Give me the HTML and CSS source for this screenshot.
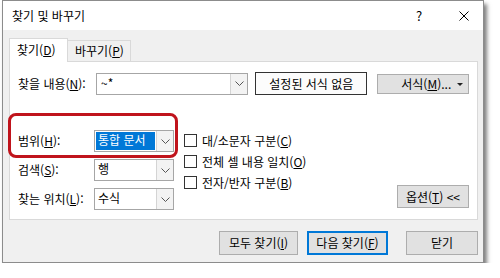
FILE: index.html
```html
<!DOCTYPE html>
<html lang="ko">
<head>
    <meta charset="UTF-8">
    <title>찾기 및 바꾸기</title>
    <link rel="stylesheet" href="styles.css">
</head>
<body>

    <div class="dialog">
        <div class="titlebar">
            <span class="title">찾기 및 바꾸기</span>
            <span class="tb-btn help">?</span>
            <span class="tb-btn close">
                <svg width="10" height="10" viewBox="0 0 10 10"><path d="M0.5 0.5 L9.5 9.5 M9.5 0.5 L0.5 9.5" stroke="#000" stroke-width="1" fill="none"/></svg>
            </span>
        </div>

        <div class="body">
            <div class="tabs">
                <div class="tab active">찾기(<u>D</u>)</div>
                <div class="tab">바꾸기(<u>P</u>)</div>
            </div>

            <div class="panel">
                <div class="find-row">
                    <span class="lbl lbl-find">찾을 내용(<u>N</u>):</span>
                    <div class="combo">
                        <span class="combo-text">~*</span>
                        <span class="arrow"><svg width="9" height="5" viewBox="0 0 9 5"><path d="M0.5 0.5 L4.5 4.5 L8.5 0.5" stroke="#555" fill="none"/></svg></span>
                    </div>
                    <div class="preview">설정된 서식 없음</div>
                    <div class="btn fmt-btn">
                        <span>서식(<u>M</u>)...</span>
                        <svg class="caret" width="6" height="3" viewBox="0 0 6 3"><path d="M0 0 H6 L3 3 Z" fill="#222"/></svg>
                    </div>
                </div>

                <div class="opts">
                    <div class="fields">
                        <div class="field">
                            <span class="lbl">범위(<u>H</u>):</span>
                            <div class="select">
                                <span class="sel-text picked">통합 문서</span>
                                <span class="arrow"><svg width="9" height="5" viewBox="0 0 9 5"><path d="M0.5 0.5 L4.5 4.5 L8.5 0.5" stroke="#555" fill="none"/></svg></span>
                            </div>
                        </div>
                        <div class="field">
                            <span class="lbl">검색(<u>S</u>):</span>
                            <div class="select">
                                <span class="sel-text">행</span>
                                <span class="arrow"><svg width="9" height="5" viewBox="0 0 9 5"><path d="M0.5 0.5 L4.5 4.5 L8.5 0.5" stroke="#555" fill="none"/></svg></span>
                            </div>
                        </div>
                        <div class="field">
                            <span class="lbl">찾는 위치(<u>L</u>):</span>
                            <div class="select">
                                <span class="sel-text">수식</span>
                                <span class="arrow"><svg width="9" height="5" viewBox="0 0 9 5"><path d="M0.5 0.5 L4.5 4.5 L8.5 0.5" stroke="#555" fill="none"/></svg></span>
                            </div>
                        </div>
                    </div>

                    <div class="checks">
                        <div class="check"><span class="box"></span>대/소문자 구분(<u>C</u>)</div>
                        <div class="check"><span class="box"></span>전체 셀 내용 일치(<u>O</u>)</div>
                        <div class="check"><span class="box"></span>전자/반자 구분(<u>B</u>)</div>
                    </div>

                    <div class="btn opt-btn">옵션(<u>T</u>) &lt;&lt;</div>
                </div>
            </div>

            <div class="actions">
                <div class="btn act-all">모두 찾기(<u>I</u>)</div>
                <div class="btn act-next">다음 찾기(<u>F</u>)</div>
                <div class="btn act-close">닫기</div>
            </div>
        </div>
    </div>

    <!-- red annotation box around the scope field -->
    <div class="callout"></div>

</body>
</html>
```

FILE: styles.css
```css
body {
    margin: 0;
    padding: 0;
    background-color: #fff;
    font-family: "Noto Sans CJK KR", "Noto Sans", sans-serif;
    font-size: 12px;
    line-height: 16px;
    color: #000;
}

u {
    text-decoration: underline;
    text-underline-offset: 1px;
}

.dialog {
    margin-left: 2px;
    width: 482px;
    height: 263px;
    box-sizing: border-box;
    border: 1px solid #8c8c8c;
    background-color: #f0f0f0;
    box-shadow: 3px 4px 4px rgba(0, 0, 0, 0.5);
}

/* title bar */
.titlebar {
    height: 29px;
    background-color: #fff;
    display: flex;
    align-items: center;
    padding-left: 9px;
}

.title {
    flex: 1;
}

.tb-btn {
    display: flex;
    justify-content: center;
    align-items: center;
    height: 29px;
}

.help {
    width: 44px;
    margin-right: 4px;
    font-size: 13px;
}

.close {
    width: 38px;
}

/* body */
.body {
    padding: 8px 5px 0 6px;
}

.tabs {
    display: flex;
    align-items: flex-end;
    height: 24px;
    margin-bottom: -1px;
    position: relative;
    z-index: 1;
}

.tab {
    box-sizing: border-box;
    border: 1px solid #d9d9d9;
    border-bottom: none;
    padding-left: 7px;
    display: flex;
    align-items: center;
}

.tab.active {
    width: 59px;
    height: 24px;
    background-color: #fff;
    padding-bottom: 1px;
}

.tab:not(.active) {
    width: 63px;
    height: 21px;
    margin-bottom: 1px;
    border-left: none;
    background-color: #f0f0f0;
}

.panel {
    box-sizing: border-box;
    width: 469px;
    height: 159px;
    background-color: #fff;
    border: 1px solid #d9d9d9;
    padding: 10px 8px 0 8px;
}

.find-row {
    display: flex;
    align-items: center;
    height: 23px;
}

.lbl {
    width: 76px;
    flex-shrink: 0;
}

.lbl-find {
    width: 78px;
}

.combo, .select {
    box-sizing: border-box;
    height: 22px;
    border: 1px solid #a6a6a6;
    display: flex;
    background-color: #fff;
}

.combo {
    width: 153px;
}

.combo-text {
    flex: 1;
    padding-left: 4px;
    line-height: 18px;
}

.arrow {
    width: 16px;
    border-left: 1px solid #d4d4d4;
    background-color: #f3f3f3;
    display: flex;
    justify-content: center;
    align-items: center;
}

.preview {
    box-sizing: border-box;
    width: 113px;
    height: 23px;
    margin-left: 7px;
    border: 1px solid #333;
    background-color: #fcfcfc;
    display: flex;
    justify-content: center;
    align-items: center;
}

.btn {
    box-sizing: border-box;
    background-color: #e1e1e1;
    border: 1px solid #adadad;
    display: flex;
    justify-content: center;
    align-items: center;
}

.fmt-btn {
    width: 92px;
    height: 20px;
    margin-left: 10px;
    position: relative;
    padding-left: 6px;
}

.caret {
    position: absolute;
    right: 5px;
    top: 8px;
}

/* options area */
.opts {
    display: flex;
    margin-top: 35px;
}

.fields {
    display: flex;
    flex-direction: column;
    gap: 7px;
}

.field {
    display: flex;
    align-items: center;
}

.select {
    width: 80px;
}

.sel-text {
    flex: 1;
    padding-left: 3px;
    line-height: 18px;
}

.sel-text.picked {
    margin: 1px 1px 1px 1px;
    padding-left: 2px;
    line-height: 16px;
    background-color: #0078d7;
    color: #fff;
}

.checks {
    margin-left: 10px;
    display: flex;
    flex-direction: column;
}

.check {
    height: 21px;
    display: flex;
    align-items: center;
}

.box {
    box-sizing: border-box;
    width: 13px;
    height: 13px;
    border: 1px solid #333;
    background-color: #fff;
    margin-right: 5px;
}

.opt-btn {
    width: 72px;
    height: 23px;
    margin-left: auto;
    align-self: flex-end;
    margin-bottom: 2px;
}

/* bottom buttons */
.actions {
    display: flex;
    justify-content: flex-end;
    margin-top: 11px;
}

.actions .btn {
    height: 24px;
}

.act-all {
    width: 79px;
}

.act-next {
    width: 81px;
    margin-left: 9px;
    border: 2px solid #0078d7;
}

.act-close {
    width: 72px;
    margin-left: 18px;
}

/* annotation */
.callout {
    position: absolute;
    left: 8px;
    top: 113px;
    width: 170px;
    height: 45px;
    box-sizing: border-box;
    border: 3px solid #c0141c;
    border-radius: 8px;
}
```
